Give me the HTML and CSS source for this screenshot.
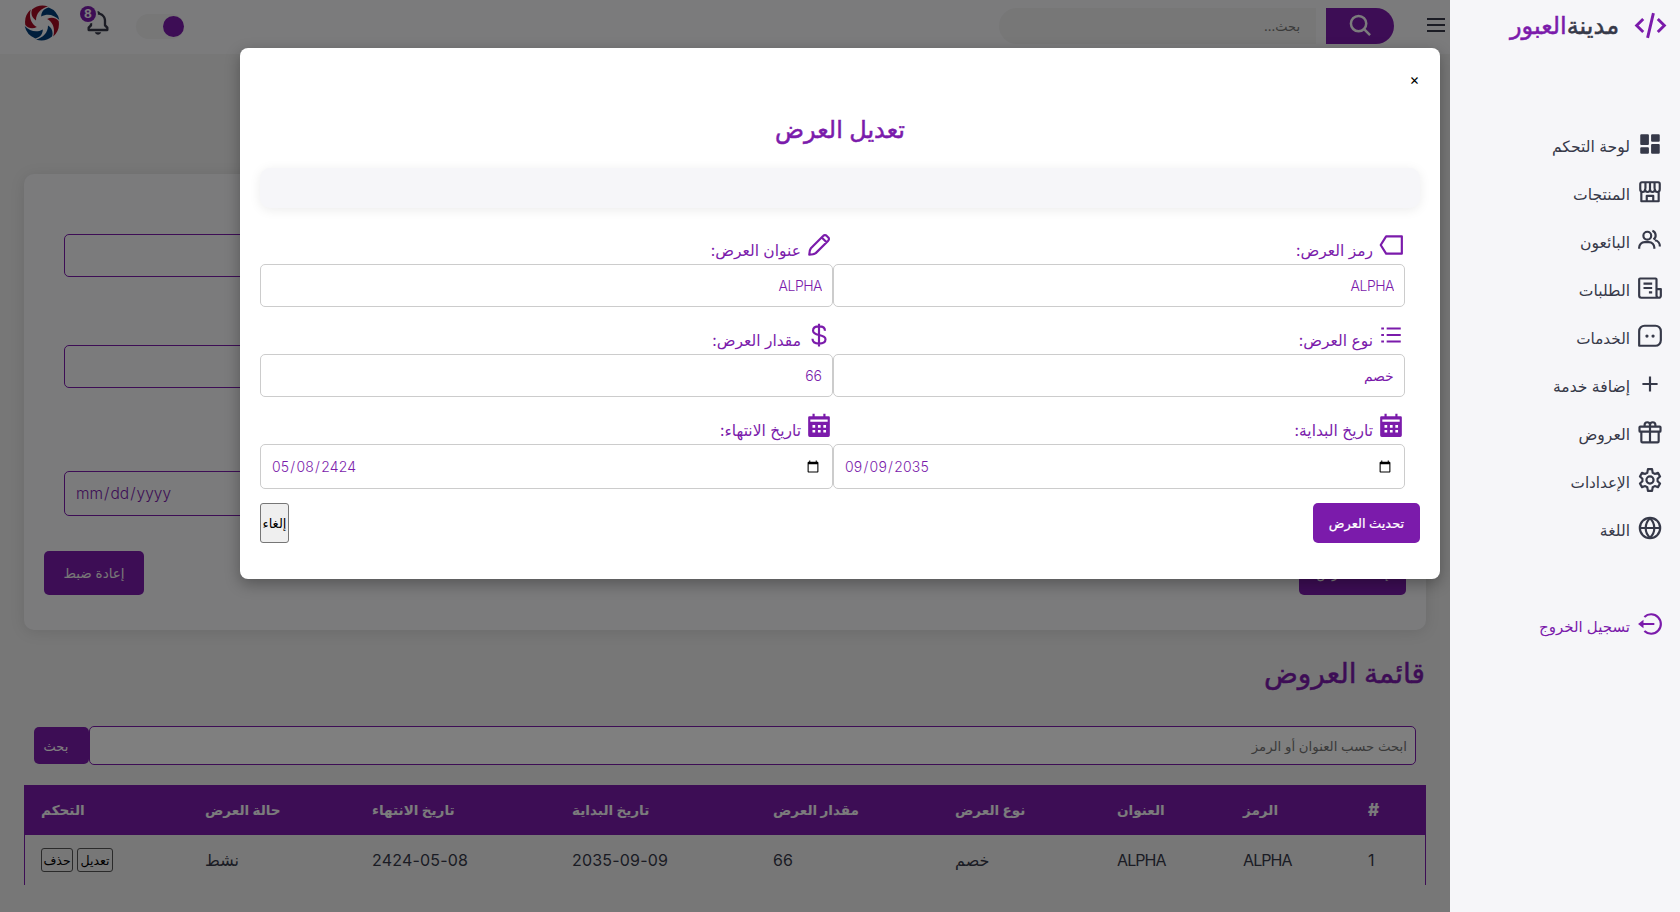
FILE: index.html
```html
<!DOCTYPE html>
<html lang="ar" dir="rtl">
<head>
<meta charset="utf-8">
<title>العروض</title>
<link rel="stylesheet" href="styles.css">
</head>
<body>
<aside class="sidebar">
  <a class="brand">
    <svg class="brand-icon" viewBox="0 0 24 24"><path d="M7 7.500 2.500 12 7 16.500M17 7.500 21.500 12 17 16.500M14 3.500 10 20.500"/></svg>
    <span class="brand-name"><span class="brand-dark">مدينة</span><span>العبور</span></span>
  </a>
  <nav class="menu">
    <a class="item"><svg class="icon solid" viewBox="0 0 24 24"><path d="M4 13h6a1 1 0 0 0 1-1V4a1 1 0 0 0-1-1H4a1 1 0 0 0-1 1v8a1 1 0 0 0 1 1zm-1 7a1 1 0 0 0 1 1h6a1 1 0 0 0 1-1v-4a1 1 0 0 0-1-1H4a1 1 0 0 0-1 1v4zm10 0a1 1 0 0 0 1 1h6a1 1 0 0 0 1-1v-7a1 1 0 0 0-1-1h-6a1 1 0 0 0-1 1v7zm1-10h6a1 1 0 0 0 1-1V4a1 1 0 0 0-1-1h-6a1 1 0 0 0-1 1v5a1 1 0 0 0 1 1z"/></svg><span class="label wide">لوحة التحكم</span></a>
    <a class="item"><svg class="icon" viewBox="0 0 24 24"><path d="M4 12v8.500h16V12M4.500 3h15A1.500 1.500 0 0 1 21 4.500v5a2.250 2.500 0 0 1-4.500 0 2.250 2.500 0 0 1-4.500 0 2.250 2.500 0 0 1-4.500 0 2.250 2.500 0 0 1-4.500 0v-5A1.500 1.500 0 0 1 4.500 3zM7.800 3.500v5.500M12 3.500v5.500M16.200 3.500v5.500M9 20v-4.500h6V20"/></svg><span class="label wide">المنتجات</span></a>
    <a class="item"><svg class="icon" viewBox="0 0 24 24"><circle cx="9.500" cy="8" r="3.600"/><path d="M2 20v-1a5 5 0 0 1 5-5h4a5 5 0 0 1 5 5v1M14.200 3.500a4.500 4.500 0 0 1 1 8M16.500 12.200a5.500 5.500 0 0 1 4.600 5.800"/></svg><span class="label wide">البائعون</span></a>
    <a class="item"><svg class="icon" viewBox="0 0 24 24"><path d="M18 13V4a.8.8 0 0 0-.8-.8H2.800A.8.8 0 0 0 2 4v15a2 2 0 0 0 2 2h16.200a1.800 1.800 0 0 0 1.800-1.800V13h-4v6a2 2 0 0 0 2 2M6 8h8M6 12h8M11 16h3"/></svg><span class="label wide">الطلبات</span></a>
    <a class="item"><svg class="icon" viewBox="0 0 24 24"><path d="M7 2.500h10a5 5 0 0 1 5 5V16a5 5 0 0 1-5 5H2V7.500a5 5 0 0 1 5-5z"/><g class="dots"><circle cx="9.200" cy="12" r="1.500"/><circle cx="14.800" cy="12" r="1.500"/></g></svg><span class="label">الخدمات</span></a>
    <a class="item"><svg class="icon" viewBox="0 0 24 24"><path d="M12 5v14M5 12h14"/></svg><span class="label wide">إضافة خدمة</span></a>
    <a class="item"><svg class="icon" viewBox="0 0 24 24"><path d="M3 7h18a.7.7 0 0 1 .7.700V11a.7.7 0 0 1-.7.700H3a.7.7 0 0 1-.7-.7V7.700A.7.7 0 0 1 3 7zM4 12v8.500a1 1 0 0 0 1 1h14a1 1 0 0 0 1-1V12M12 7v14.500M12 7V5.500a2.500 2.500 0 1 0-5 0c0 .6.200 1.100.5 1.500M12 5.500a2.500 2.500 0 1 1 5 0c0 .6-.2 1.100-.5 1.500"/></svg><span class="label wide">العروض</span></a>
    <a class="item"><svg class="icon" viewBox="0 0 24 24"><circle cx="12" cy="12" r="3.300"/><path d="M10.100 2h3.800l.6 3.300 1.900 1.100 3-1 1.900 3.300-2.300 2.100v2.400l2.300 2.100-1.900 3.300-3-1-1.900 1.100-.6 3.300h-3.800l-.6-3.300-1.900-1.100-3 1-1.900-3.300 2.300-2.100v-2.400L2.700 8.700l1.900-3.300 3 1 1.900-1.100z"/></svg><span class="label">الإعدادات</span></a>
    <a class="item"><svg class="icon" viewBox="0 0 24 24"><circle cx="12" cy="12" r="9.400"/><path d="M3 12h18M12 3c-5.300 5-5.300 13 0 18M12 3c5.300 5 5.300 13 0 18"/></svg><span class="label wide">اللغة</span></a>
  </nav>
  <a class="item logout"><svg class="icon" viewBox="0 0 24 24"><path d="M6.800 5.500a9 9 0 1 1 0 13M5 12h11"/><path class="fill" d="M1 12 6 8v8z"/></svg><span class="label">تسجيل الخروج</span></a>
</aside>

<main class="content">
  <header class="topbar">
    <svg class="menu-icon" viewBox="0 0 18 14"><path d="M0 1h18M0 7h18M0 13h18"/></svg>
    <form class="search">
      <button class="search-btn" type="button"><svg viewBox="0 0 24 24"><circle cx="10" cy="10" r="8"/><path d="m16 16 6 6"/></svg></button>
      <input class="search-input" placeholder="بحث...">
    </form>
    <span class="toggle"><i class="knob"></i></span>
    <span class="bell">
      <svg viewBox="0 0 24 24"><path d="M19 13.586V10c0-3.217-2.185-5.927-5.145-6.742C13.562 2.520 12.846 2 12 2s-1.562.520-1.855 1.258C7.185 4.074 5 6.783 5 10v3.586l-1.707 1.707A.996.996 0 0 0 3 16v2a1 1 0 0 0 1 1h16a1 1 0 0 0 1-1v-2a.996.996 0 0 0-.293-.707L19 13.586zM19 17H5v-.586l1.707-1.707A.996.996 0 0 0 7 14v-4c0-2.757 2.243-5 5-5s5 2.243 5 5v4c0 .266.105.520.293.707L19 16.414V17zm-7 5a2.980 2.980 0 0 0 2.818-2H9.182A2.980 2.980 0 0 0 12 22z"/></svg>
      <b class="badge">8</b>
    </span>
    <svg class="avatar" viewBox="-18 -18 36 36">
      <defs><path id="blade" d="M-10-13.500A17 17 0 0 1 6-16.500C-1-14.500-6-10-6-2.500-10-5-11.500-9-10-13.500z"/></defs>
      <g class="red"><use href="#blade"/><use href="#blade" transform="rotate(120)"/><use href="#blade" transform="rotate(-60)"/></g>
      <g class="blue"><use href="#blade" transform="rotate(60)"/><use href="#blade" transform="rotate(180)"/><use href="#blade" transform="rotate(-120)"/></g>
    </svg>
  </header>

  <section class="form-card">
    <div class="bg-field"></div>
    <div class="bg-field second"></div>
    <input class="bg-field third" type="date" dir="ltr" lang="en">
    <div class="form-actions">
      <button class="btn add" type="button">إضافة العرض</button>
      <button class="btn reset" type="button">إعادة ضبط</button>
    </div>
  </section>

  <h2 class="list-title"><span>قائمة العروض</span></h2>
  <div class="list-search">
    <input class="list-input" placeholder="ابحث حسب العنوان أو الرمز">
    <button class="btn list-btn" type="button">بحث</button>
  </div>
  <table class="offers">
    <colgroup><col class="c1"><col class="c2"><col class="c3"><col class="c4"><col class="c5"><col class="c6"><col class="c7"><col class="c8"><col class="c9"></colgroup>
    <thead><tr><th class="num">#</th><th>الرمز</th><th>العنوان</th><th>نوع العرض</th><th>مقدار العرض</th><th>تاريخ البداية</th><th>تاريخ الانتهاء</th><th>حالة العرض</th><th>التحكم</th></tr></thead>
    <tbody><tr><td>1</td><td class="code">ALPHA</td><td class="code">ALPHA</td><td>خصم</td><td>66</td><td class="date">2035-09-09</td><td class="date">2424-05-08</td><td>نشط</td><td><div class="row-actions"><button class="mini edit">تعديل</button><button class="mini del">حذف</button></div></td></tr></tbody>
  </table>
</main>

<div class="overlay"></div>
<section class="modal">
  <button class="close">×</button>
  <h1 class="modal-title">تعديل العرض</h1>
  <div class="strip"></div>
  <div class="grid">
    <div class="field"><label><svg class="icon" viewBox="0 0 24 24"><path d="M7.500 4H22v16H7.500L2.500 12z"/></svg><span>رمز العرض:</span></label><input class="code" value="ALPHA"></div>
    <div class="field"><label><svg class="icon" viewBox="0 0 24 24"><path d="M3 21c0-3.500.3-4.500 1.500-6L16 3.500a2 2 0 0 1 3 0l1.500 1.500a2 2 0 0 1 0 3L9 19.500C7.500 20.700 6.500 21 3 21zM14.500 5l4.500 4.500"/></svg><span>عنوان العرض:</span></label><input class="code" value="ALPHA"></div>
    <div class="field"><label><svg class="icon" viewBox="0 0 24 24"><path d="M3 6h2.500M8 6H21M3 12h2.500M8 12H21M3 18h2.500M8 18H21"/></svg><span>نوع العرض:</span></label><input value="خصم"></div>
    <div class="field"><label><svg class="icon" viewBox="0 0 24 24"><path d="M12 1.500v21M17.500 8c0-2.300-2-4-5.500-4S6.500 5.500 6.500 8c0 5.500 11.500 2.500 11.500 8 0 2.500-2.500 4-6 4s-6-1.500-6-4.500"/></svg><span>مقدار العرض:</span></label><input value="66"></div>
    <div class="field"><label><svg class="icon solid" viewBox="0 0 24 24"><path fill-rule="evenodd" d="M3 4h3V1.500h2V4h8V1.500h2V4h3a1 1 0 0 1 1 1v16.500a1.500 1.500 0 0 1-1.500 1.500h-17A1.500 1.500 0 0 1 2 21.500V5a1 1 0 0 1 1-1zm1 3v2h16V7zM6 12v2.500h2.500V12zm5 0v2.500h2.500V12zm5 0v2.500h2.500V12zM6 16.500V19h2.500v-2.500zm5 0V19h2.500v-2.500zm5 0V19h2.500v-2.500z"/></svg><span>تاريخ البداية:</span></label><input type="date" dir="ltr" lang="en" value="2035-09-09"></div>
    <div class="field"><label><svg class="icon solid" viewBox="0 0 24 24"><path fill-rule="evenodd" d="M3 4h3V1.500h2V4h8V1.500h2V4h3a1 1 0 0 1 1 1v16.500a1.500 1.500 0 0 1-1.500 1.500h-17A1.500 1.500 0 0 1 2 21.500V5a1 1 0 0 1 1-1zm1 3v2h16V7zM6 12v2.500h2.500V12zm5 0v2.500h2.500V12zm5 0v2.500h2.500V12zM6 16.500V19h2.500v-2.500zm5 0V19h2.500v-2.500zm5 0V19h2.500v-2.500z"/></svg><span>تاريخ الانتهاء:</span></label><input type="date" dir="ltr" lang="en" value="2424-05-08"></div>
  </div>
  <div class="modal-actions">
    <button class="btn update" type="button">تحديث العرض</button>
    <button class="cancel" type="button">إلغاء</button>
  </div>
</section>
</body>
</html>
```

FILE: styles.css
```css
:root {
  --purple: #7b1bab;
  --dark: #363949;
  --light: #f6f6f9;
}
* { box-sizing: border-box; margin: 0; padding: 0; }
html, body { height: 912px; overflow: hidden; }
body {
  display: flex;
  background: #eee;
  color: var(--dark);
  font-family: Inter, "DejaVu Sans", sans-serif;
  font-size: 16px;
}
button, input { font-family: inherit; }

/* Sidebar */
.sidebar {
  position: relative;
  z-index: 5;
  width: 230px;
  height: 912px;
  background: var(--light);
  flex: none;
}
.brand { display: flex; height: 54px; padding-right: 12px; align-items: center; color: var(--purple); }
.brand-icon { width: 35px; height: 35px; fill: none; stroke: currentColor; stroke-width: 2; margin-top: -3px; }
.brand-name { font-size: 24px; font-weight: 500; margin-right: 14px; margin-top: -3px; white-space: nowrap; -webkit-text-stroke: .5px currentColor; }
.brand-dark { color: var(--dark); }
.menu { padding-top: 66px; }
.item { display: flex; height: 48px; align-items: center; padding-right: 17px; }
.icon { width: 26px; height: 26px; fill: none; stroke: currentColor; stroke-width: 2; stroke-linejoin: round; flex: none; }
.icon.solid { fill: currentColor; stroke: none; }
.icon .fill, .dots { fill: currentColor; stroke: none; }
.label { font-size: 15.2px; margin-right: 7px; padding-top: 4px; white-space: nowrap; }
.label.wide { font-size: 15.6px; }
.logout { margin-top: 48px; color: var(--purple); }
.logout .label { font-size: 15px; }

/* Page */
.content { width: 1450px; height: 912px; flex: none; }
.topbar { display: flex; height: 54px; padding: 0 5px 0 24px; background: var(--light); }
.menu-icon { width: 18px; height: 14px; margin-top: 18px; stroke: var(--dark); stroke-width: 2; }
.search { display: flex; gap: 10px; margin: 8px 33px 0 0; height: 36px; }
.search-btn { width: 68px; border: 0; border-radius: 0 36px 36px 0; background: var(--purple); }
.search-btn svg { width: 23px; height: 23px; fill: none; stroke: var(--light); stroke-width: 2.600; margin-top: 1px; }
.search-input { width: 317px; border: 0; border-radius: 36px 0 0 36px; background: #eee; padding: 0 16px; font-size: 13px; }
.toggle { width: 48px; height: 25px; margin: 14px auto 0 0; border-radius: 13px; background: #eee; }
.knob { display: block; width: 21px; height: 21px; margin: 2px 0 0; border-radius: 50%; background: var(--purple); }
.bell { position: relative; width: 24px; height: 24px; margin: 9px 26px 0 26px; }
.bell svg { display: block; width: 28px; height: 28px; margin-right: -2px; fill: var(--dark); }
.badge { position: absolute; left: -6px; top: -3px; width: 16px; height: 16px; border-radius: 50%; background: var(--purple); box-shadow: 0 0 0 2px var(--light); color: var(--light); font-size: 12px; line-height: 16px; text-align: center; }
.avatar { width: 36px; height: 36px; margin-top: 5px; }
.red { fill: #a50b22; }
.blue { fill: #003d78; }

.form-card { margin: 120px 24px 0; height: 456px; padding: 60px 20px 0; border-radius: 10px; background: var(--light); box-shadow: 0 2px 15px rgba(0, 0, 0, .1); display: flex; flex-direction: column; }
.bg-field { height: 43px; margin: 0 20px; border: 1px solid var(--purple); border-radius: 5px; background: var(--light); flex: none; }
.second { margin-top: 68px; }
.third { margin-top: 83px; height: 45px; padding: 10px; color: var(--purple); font-size: 15.500px; font-weight: 300; }
.form-actions { display: flex; justify-content: space-between; margin-top: 35px; }
.btn { border: 0; border-radius: 5px; background: var(--purple); color: #fff; white-space: nowrap; }
.add { width: 107px; height: 44px; font-size: 13px; }
.reset { width: 100px; height: 44px; font-size: 13.500px; color: #eee; }
.list-title { height: 87px; margin: 9px 25px 0; padding-top: 17px; color: var(--purple); font-size: 28px; font-weight: 500; white-space: nowrap; -webkit-text-stroke: .5px currentColor; }
.list-search { display: flex; align-items: center; margin: 0 34px; height: 39px; }
.list-input { flex: 1; height: 39px; padding: 0 8px; border: 1px solid var(--purple); border-radius: 5px; background: #fff; font-size: 13.300px; }
.list-btn { width: 55px; height: 37px; font-size: 13px; padding-right: 5px; padding-left: 0; text-indent: 6px; }
.offers { width: 1402px; margin: 20px 24px 0; table-layout: fixed; border-collapse: separate; border-spacing: 0; border-right: 1px solid var(--purple); border-left: 1px solid var(--purple); }
.offers th, .offers td { height: 50px; padding: 0 16px; text-align: left; white-space: nowrap; font-size: 16px; }
.offers th { background: var(--purple); color: var(--light); font-size: 13.600px; }
.offers .num { font-size: 17px; font-weight: 800; }
.offers .code { letter-spacing: -.9px; }
.offers .date { letter-spacing: .2px; }
.c1 { width: 73px; } .c2 { width: 125px; } .c3 { width: 126px; } .c4 { width: 162px; } .c5 { width: 182px; }
.c6 { width: 201px; } .c7 { width: 200px; } .c8 { width: 167px; } .c9 { width: 164px; }
.row-actions { display: flex; gap: 4px; justify-content: flex-end; }
.mini { height: 24px; border: 1px solid #555; border-radius: 3px; background: #efefef; font-size: 12.500px; white-space: nowrap; }
.edit { width: 36px; }
.del { width: 32px; }

/* Dialog */
.overlay { position: absolute; z-index: 2; left: 0; top: 0; width: 1450px; height: 912px; background: rgba(0, 0, 0, .5); }
.modal { position: absolute; z-index: 3; left: 240px; top: 48px; width: 1200px; height: 531px; padding: 20px; border-radius: 8px; background: #fff; box-shadow: 0 5px 15px rgba(0, 0, 0, .3); }
.close { display: block; width: 11px; height: 24px; border: 0; background: none; font-size: 15px; line-height: 22px; color: #000; }
.modal-title { height: 76px; padding-top: 23px; text-align: center; color: var(--purple); font-size: 24px; font-weight: 500; -webkit-text-stroke: .5px currentColor; }
.strip { height: 40px; border-radius: 10px; background: var(--light); box-shadow: 0 2px 12px rgba(0, 0, 0, .08); }
.grid { display: grid; grid-template-columns: 572px 573px; grid-template-rows: 90px 90px 90px; margin: 11px 15px 0 0; padding-top: 3px; }
.field { display: flex; flex-direction: column; padding-top: 10px; }
.field label { display: flex; height: 32px; padding-right: 1px; color: var(--purple); font-size: 15.500px; white-space: nowrap; }
.field label span { margin-right: 5px; padding-top: 9px; }
.field input { width: 100%; height: 43px; padding: 10px; border: 1px solid #ccc; border-radius: 5px; background: #fff; color: var(--purple); font-size: 14px; font-weight: 300; flex: none; }
.field .code { letter-spacing: -.5px; }
.field input[type="date"] { height: 45px; letter-spacing: .2px; }
.modal-actions { display: flex; justify-content: space-between; margin-top: 11px; }
.update { width: 107px; height: 40px; font-size: 13px; font-weight: 500; -webkit-text-stroke: .2px currentColor; }
.cancel { width: 29px; height: 40px; border: 1px solid #767676; border-radius: 3px; background: #efefef; font-size: 13px; white-space: nowrap; }
```
